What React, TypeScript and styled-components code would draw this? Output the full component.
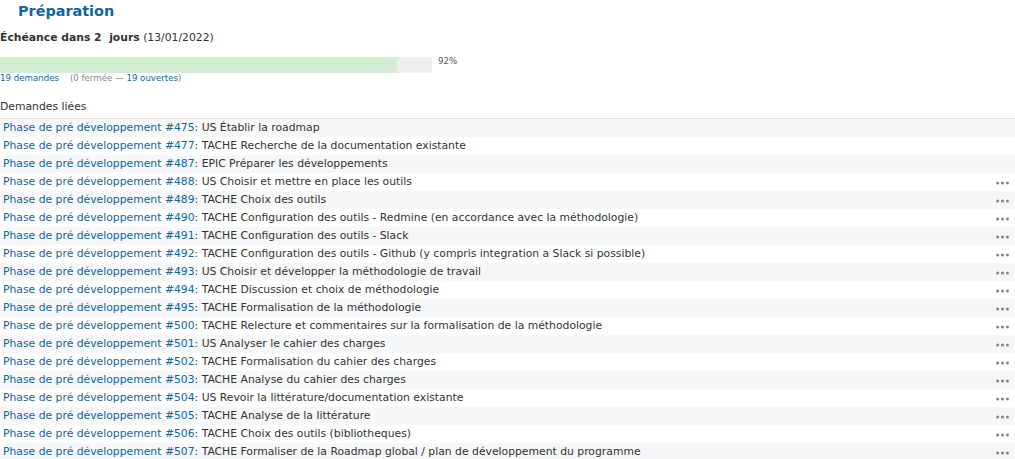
import React from "react";
import styled, { createGlobalStyle } from "styled-components";

const Global = createGlobalStyle`
  html, body { margin: 0; padding: 0; background: #fff; }
  body { font-family: "DejaVu Sans", Verdana, sans-serif; font-size: 10.8px; color: #333; }
  a { color: #169; text-decoration: none; }
`;

const Page = styled.div`
  display: flex;
  flex-direction: column;
  width: 1015px;
`;

const Title = styled.h3`
  margin: 0;
  padding-left: 18px;
  font-size: 14.4px;
  font-weight: bold;
  line-height: 22px;
  height: 22px;
  color: #169;
`;

const Due = styled.p`
  margin: 6px 0 0;
  line-height: 20px;
  font-size: 10.8px;
  color: #333;
  strong { font-weight: bold; }
`;

const ProgressRow = styled.div`
  display: flex;
  align-items: flex-start;
  margin-top: 9px;
`;

const Bar = styled.div`
  width: 432px;
  height: 16px;
  background: #eee;
  display: flex;
`;

const Fill = styled.div`
  height: 100%;
  background: #d3edd3;
`;

const Percent = styled.span`
  margin: -1px 0 0 6px;
  font-size: 8.64px;
  line-height: 10px;
  color: #555;
`;

const Counts = styled.div`
  font-size: 8.64px;
  line-height: 11px;
  color: #888;
  display: flex;
`;

const Paren = styled.span`
  margin-left: 11px;
`;

const Label = styled.div`
  margin-top: 13px;
  line-height: 20px;
  font-size: 10.8px;
  color: #333;
`;

const Table = styled.div`
  margin-top: 1px;
  border-top: 1px solid #e4e4e4;
  display: flex;
  flex-direction: column;
`;

const Row = styled.div<{ $odd: boolean }>`
  display: flex;
  align-items: center;
  justify-content: space-between;
  height: 18px;
  padding: 0 6px 0 3px;
  background: ${(p) => (p.$odd ? "#f6f7f8" : "#fff")};
  line-height: 18px;
  font-size: 10.8px;
  color: #333;
  white-space: nowrap;
`;

const Dots = styled.svg`
  width: 13px;
  height: 4px;
  display: block;
  margin-top: 1px;
`;

const MoreIcon = () => (
  <Dots viewBox="0 0 13 4">
    <circle cx="1.6" cy="2" r="1.6" fill="#8a8a8a" />
    <circle cx="6.5" cy="2" r="1.6" fill="#8a8a8a" />
    <circle cx="11.4" cy="2" r="1.6" fill="#8a8a8a" />
  </Dots>
);

const issues: [number, string, boolean][] = [
  [475, "US Établir la roadmap", false],
  [477, "TACHE Recherche de la documentation existante", false],
  [487, "EPIC Préparer les développements", false],
  [488, "US Choisir et mettre en place les outils", true],
  [489, "TACHE Choix des outils", true],
  [490, "TACHE Configuration des outils - Redmine (en accordance avec la méthodologie)", true],
  [491, "TACHE Configuration des outils - Slack", true],
  [492, "TACHE Configuration des outils - Github (y compris integration a Slack si possible)", true],
  [493, "US Choisir et développer la méthodologie de travail", true],
  [494, "TACHE Discussion et choix de méthodologie", true],
  [495, "TACHE Formalisation de la méthodologie", true],
  [500, "TACHE Relecture et commentaires sur la formalisation de la méthodologie", true],
  [501, "US Analyser le cahier des charges", true],
  [502, "TACHE Formalisation du cahier des charges", true],
  [503, "TACHE Analyse du cahier des charges", true],
  [504, "US Revoir la littérature/documentation existante", true],
  [505, "TACHE Analyse de la littérature", true],
  [506, "TACHE Choix des outils (bibliotheques)", true],
  [507, "TACHE Formaliser de la Roadmap global / plan de développement du programme", true],
];

export default function App() {
  const pct = 92;
  return (
    <Page>
      <Global />
      <Title>Préparation</Title>
      <Due>
        <strong>Échéance dans 2&nbsp; jours</strong> (13/01/2022)
      </Due>
      <ProgressRow>
        <Bar>
          <Fill style={{ width: `${pct}%` }} />
        </Bar>
        <Percent>{pct}%</Percent>
      </ProgressRow>
      <Counts>
        <a href="#">19 demandes</a>
        <Paren>
          (0 fermée — <a href="#">19 ouvertes</a>)
        </Paren>
      </Counts>
      <Label>Demandes liées</Label>
      <Table>
        {issues.map(([id, text, more], i) => (
          <Row key={id} $odd={i % 2 === 0}>
            <span>
              <a href="#">Phase de pré développement #{id}</a>: {text}
            </span>
            {more && <MoreIcon />}
          </Row>
        ))}
      </Table>
    </Page>
  );
}
